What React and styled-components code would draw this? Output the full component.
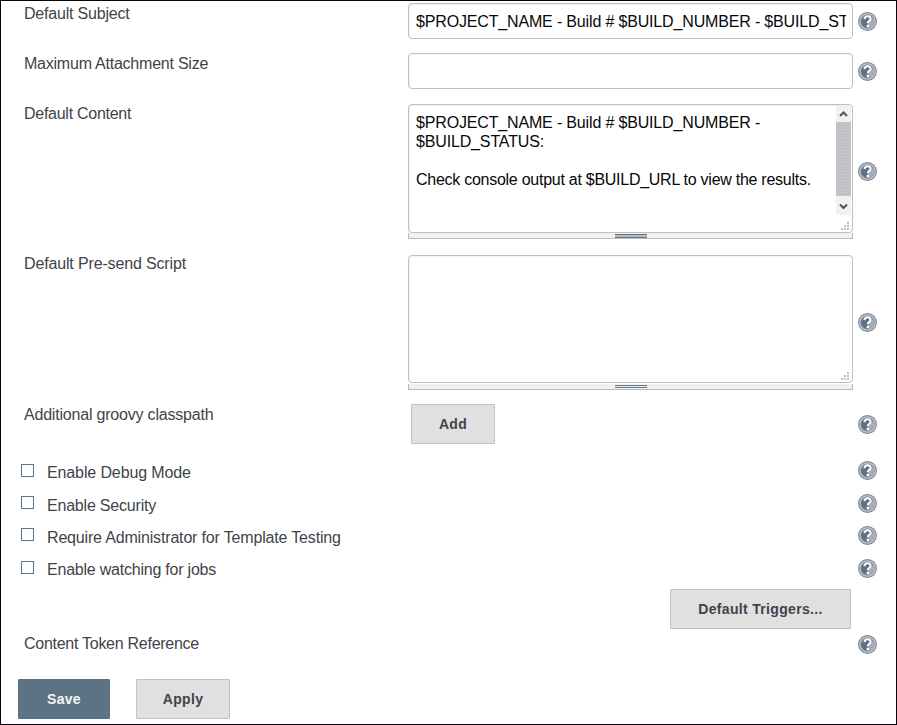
import React from "react";
import styled, { createGlobalStyle, css } from "styled-components";

const GlobalStyle = createGlobalStyle`
  * { box-sizing: border-box; }
  body { margin: 0; background: #fff; font-family: "Liberation Sans", Arial, sans-serif; }
`;

const Page = styled.main`
  display: flex;
  flex-direction: column;
  width: 897px;
  height: 725px;
  padding-top: 2px;
  border: 1px solid #0a0309;
  overflow: hidden;
  color: #40444a;
  font-size: 16px;
  line-height: 18px;
  background: #fff;
`;

const Row = styled.div`
  display: grid;
  grid-template-columns: 384px 445px 19px;
  column-gap: 0;
  align-items: start;
  flex: none;
  height: ${(p) => p.$height}px;
  padding-left: 23px;
`;

const Label = styled.label`
  padding-top: ${(p) => p.$top ?? 2}px;
  letter-spacing: ${(p) => p.$spacing ?? -0.2}px;
  white-space: nowrap;
`;

const HelpSlot = styled.div`
  margin-left: 5px;
  padding-top: ${(p) => p.$top}px;
  height: ${(p) => p.$top + 19}px;
`;

const HelpSvg = styled.svg`
  display: block;
  width: 19px;
  height: 19px;
`;

const fieldBox = css`
  display: block;
  width: 445px;
  border: 1px solid #bfbfc2;
  border-radius: 4px;
  background: #fff;
  box-shadow: inset 1px 1px 1px #f3f3f3;
  color: #07070b;
  font: 16px "Liberation Sans", Arial, sans-serif;
  outline: none;
`;

const TextInput = styled.input`
  ${fieldBox}
  height: 36px;
  padding: 2px 6px 0 7px;
  letter-spacing: -0.16px;
`;

const AreaFrame = styled.div`
  ${fieldBox}
  position: relative;
  height: ${(p) => p.$height}px;
`;

const AreaText = styled.div`
  padding: 8px 20px 0 7px;
  line-height: 19px;
`;

const AreaLine = styled.div`
  min-height: 19px;
  letter-spacing: ${(p) => p.$spacing}px;
  white-space: pre;
`;

const ScrollTrack = styled.div`
  position: absolute;
  top: 0;
  right: 1px;
  display: flex;
  flex-direction: column;
  width: 15px;
  height: 110px;
  background: #f1f1ed;
`;

const ScrollArrow = styled.svg`
  display: block;
  flex: none;
  width: 15px;
  height: ${(p) => p.$height}px;
`;

const ScrollThumb = styled.div`
  flex: 1;
  background: radial-gradient(circle, #d0d0d2 0 0.6px, transparent 0.8px) 0 0 / 3px 3px #c0c1c5;
`;

const Grip = styled.svg`
  position: absolute;
  right: 3px;
  bottom: 2px;
  width: 8px;
  height: 8px;
`;

const ResizeBar = styled.div`
  display: flex;
  justify-content: center;
  align-items: flex-start;
  width: 445px;
  height: 6px;
  margin-top: ${(p) => p.$gap}px;
  padding-top: 1px;
  border: solid #b9b9be;
  border-width: 0 1px 1px;
  background: #f1f1ee;
`;

const ResizeGrip = styled.div`
  width: 32px;
  height: ${(p) => (p.$filled ? 4 : 3)}px;
  border: solid #5f788a;
  border-width: 1px 0;
  background: ${(p) => (p.$filled ? "#b6bcc1" : "#eeeeec")};
`;

const Button = styled.button`
  width: ${(p) => p.$width}px;
  height: 40px;
  padding: 0;
  border: 1px solid ${(p) => (p.$primary ? "#587083" : "#c2c2c4")};
  border-radius: 1px;
  background: ${(p) => (p.$primary ? "#5b7385" : "#e0e0e0")};
  color: ${(p) => (p.$primary ? "#f5f5f2" : "#40444a")};
  font: bold 14px "Liberation Sans", Arial, sans-serif;
  letter-spacing: 0.32px;
`;

const AddSlot = styled.div`
  padding-left: 3px;
`;

const CheckRow = styled.div`
  display: flex;
  flex: none;
  align-items: flex-start;
  height: ${(p) => p.$height}px;
  padding: 0 19px 0 20px;
`;

const Checkbox = styled.input`
  appearance: none;
  flex: none;
  width: 13px;
  height: 13px;
  margin: 9px 13px 0 0;
  border: 1px solid #5b7688;
  background: #fff;
`;

const CheckLabel = styled.label`
  flex: 1;
  padding-top: ${(p) => p.$top}px;
  letter-spacing: ${(p) => p.$spacing}px;
`;

const TriggerRow = styled.div`
  display: flex;
  flex: none;
  justify-content: flex-end;
  height: 50px;
  padding: 4px 45px 0 0;
`;

const Footer = styled.footer`
  display: flex;
  flex: none;
  gap: 26px;
  padding-left: 17px;
`;

function Help({ top }) {
  return (
    <HelpSlot $top={top}>
      <HelpSvg viewBox="0 0 19 19" role="img" aria-label="Help">
        <circle cx="9.5" cy="9.5" r="8.9" fill="#c3c6cd" stroke="#7d8894" strokeWidth="1.1" />
        <circle cx="9.5" cy="9.5" r="6.8" fill="#5b7385" stroke="#8f98a5" strokeWidth="0.8" />
        <path d="M9.5 16.3A6.8 6.8 0 0 0 15.2 5.8L12.6 8 10 12z" fill="#a7abb5" />
        <path
          d="M6.4 7.1C6.6 5.1 7.8 4.2 9.6 4.2s3 .9 3 2.5c0 2.2-2.8 2.1-2.8 4.5"
          fill="none"
          stroke="#fff"
          strokeWidth="2"
        />
        <circle cx="9.8" cy="14" r="1.35" fill="#fff" />
      </HelpSvg>
    </HelpSlot>
  );
}

function ScrollBar() {
  return (
    <ScrollTrack>
      <ScrollArrow $height={17} viewBox="0 0 15 17">
        <path d="M4 11 7.5 7.5 11 11" fill="none" stroke="#465563" strokeWidth="2" />
      </ScrollArrow>
      <ScrollThumb />
      <ScrollArrow $height={19} viewBox="0 0 15 19">
        <path d="M4 8.5 7.5 12 11 8.5" fill="none" stroke="#465563" strokeWidth="2" />
      </ScrollArrow>
    </ScrollTrack>
  );
}

const gripDots = [[6, 0], [3, 3], [6, 3], [0, 6], [3, 6], [6, 6]];

function TextArea({ height, gap, scroll, lines = [] }) {
  return (
    <div>
      <AreaFrame $height={height}>
        <AreaText>
          {lines.map((line, i) => (
            <AreaLine key={i} $spacing={line.spacing}>{line.text}</AreaLine>
          ))}
        </AreaText>
        {scroll && <ScrollBar />}
        <Grip viewBox="0 0 8 8">
          {gripDots.map(([x, y]) => (
            <rect key={`${x}-${y}`} x={x} y={y} width="2" height="2" fill="#bfc0c5" />
          ))}
        </Grip>
      </AreaFrame>
      <ResizeBar $gap={gap}>
        <ResizeGrip $filled={scroll} />
      </ResizeBar>
    </div>
  );
}

const contentLines = [
  { text: "$PROJECT_NAME - Build # $BUILD_NUMBER -", spacing: -0.16 },
  { text: "$BUILD_STATUS:", spacing: -0.15 },
  { text: "", spacing: 0 },
  { text: "Check console output at $BUILD_URL to view the results.", spacing: -0.265 },
];

const options = [
  { text: "Enable Debug Mode", height: 32, help: 6, top: 9, spacing: -0.12 },
  { text: "Enable Security", height: 32, help: 7, top: 10, spacing: -0.2 },
  { text: "Require Administrator for Template Testing", height: 33, help: 7, top: 10, spacing: -0.17 },
  { text: "Enable watching for jobs", height: 33, help: 7, top: 9, spacing: -0.22 },
];

export default function App() {
  return (
    <>
      <GlobalStyle />
      <Page>
        <Row $height={50}>
          <Label>Default Subject</Label>
          <TextInput defaultValue="$PROJECT_NAME - Build # $BUILD_NUMBER - $BUILD_ST" />
          <Help top={9} />
        </Row>
        <Row $height={51}>
          <Label $spacing={-0.23}>Maximum Attachment Size</Label>
          <TextInput />
          <Help top={9} />
        </Row>
        <Row $height={151}>
          <Label $top={1} $spacing={-0.27}>Default Content</Label>
          <TextArea height={129} gap={0} scroll lines={contentLines} />
          <Help top={58} />
        </Row>
        <Row $height={149}>
          <Label $top={0} $spacing={-0.15}>Default Pre-send Script</Label>
          <TextArea height={128} gap={1} />
          <Help top={58} />
        </Row>
        <Row $height={51}>
          <Label>Additional groovy classpath</Label>
          <AddSlot>
            <Button $width={84}>Add</Button>
          </AddSlot>
          <Help top={11} />
        </Row>
        {options.map((o, i) => (
          <CheckRow key={o.text} $height={o.height}>
            <Checkbox type="checkbox" id={`option-${i}`} />
            <CheckLabel htmlFor={`option-${i}`} $top={o.top} $spacing={o.spacing}>{o.text}</CheckLabel>
            <Help top={o.help} />
          </CheckRow>
        ))}
        <TriggerRow>
          <Button $width={181}>Default Triggers...</Button>
        </TriggerRow>
        <Row $height={44}>
          <Label $top={0} $spacing={-0.27}>Content Token Reference</Label>
          <span />
          <Help top={0} />
        </Row>
        <Footer>
          <Button $width={92} $primary>Save</Button>
          <Button $width={94}>Apply</Button>
        </Footer>
      </Page>
    </>
  );
}
